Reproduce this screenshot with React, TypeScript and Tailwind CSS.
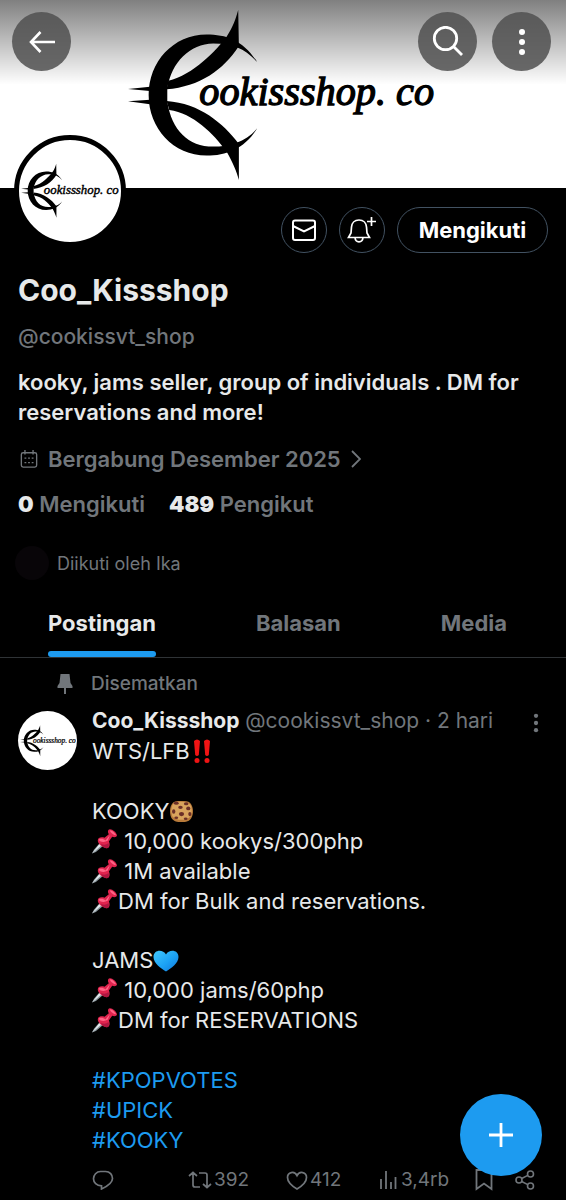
import type { ReactNode } from "react";

function Logo({ className }: { className: string }) {
  return (
    <svg viewBox="384 24 922 528" className={className} role="img" aria-label="Cookissshop.co">
      <path d="M772 186C730 120 680 103 620 103C520 103 446 185 446 285C446 385 520 467 620 467C680 467 735 445 772 385C740 425 690 440 640 440C565 440 515 390 502 305L502 265C515 185 570 132 640 130C700 130 735 145 772 186Z" />
      <path d="M715 30L717 138C670 210 600 260 500 268L505 242C580 225 650 150 680 110C700 80 708 55 715 30Z" />
      <path d="M717 540L717 432C670 370 600 310 500 303L508 330C580 340 640 400 680 455C700 490 710 515 717 540Z" />
      <path d="M384 267L450 260V273ZM384 304L450 299V313Z" />
      <text x="598" y="315" fontSize="121" stroke="black" strokeWidth="4" className="font-['Liberation_Serif',serif] italic">
        ookissshop. co
      </text>
    </svg>
  );
}

function Pushpin() {
  return (
    <svg viewBox="0 0 26 26" className="mr-px inline-block size-[25px] align-[-5px]" aria-hidden="true">
      <path d="M0 25.500L2 21.500L9.500 13L13 16.500L4 24Z" fill="#8d999f" />
      <path d="M0 25.500L9 14L11 16Z" fill="#e4eaed" />
      <path d="M6 12C6 8.500 10 8 13 9L17.500 5.500C16 3 16.500 .5 18.500 .3C21 0 25.500 3.500 26 6.500C26 8.500 23 9 21 8L17.500 13C19 16 18.500 19.500 15.500 20C12 20 6 16 6 12Z" fill="#e0244e" />
      <path d="M7 11.500C8 9.500 12 10 14 12L18.500 6.500L16.500 12C13.500 14 9 14 7 11.500ZM18.500 1.200C21 1.200 24.500 4.500 25 6.500C22 6 19 3.500 18.500 1.200Z" fill="#ff6687" />
      <path d="M9 15C12 17 15 16.500 17 14.500C18.500 17.500 17 19.500 15.500 20C13 20 10.500 18 9 15Z" fill="#ad1740" />
    </svg>
  );
}

function Cookie() {
  return (
    <svg viewBox="0 0 24 24" className="inline-block size-[25px] align-[-5px]" aria-hidden="true">
      <path d="M3 4.500C5 1.500 9 2 12 2C16 1.500 20 2 21.500 5.500C23.500 9 23.500 14 22 17C20 22 16 22 12 22C8 22.500 4 21.500 2 17.500C.5 13 .5 8 3 4.500Z" fill="#b87a3a" />
      <path d="M4 4.500C7 2 17 2 20.500 5.500C22.500 9 22 14 20.500 17C17 21 7 21 3.500 17C1.500 13 2 8 4 4.500Z" fill="#d9a45d" />
      <g fill="#6b2f27">
        <ellipse cx="7" cy="4" rx="2.300" ry="1.500" />
        <ellipse cx="16.500" cy="4.500" rx="2.200" ry="1.500" />
        <ellipse cx="11" cy="8" rx="2.200" ry="1.500" />
        <ellipse cx="4.500" cy="12" rx="1.600" ry="2.200" />
        <ellipse cx="12" cy="14.500" rx="2.500" ry="2" />
        <ellipse cx="18.500" cy="9" rx="2" ry="1.800" />
        <ellipse cx="20" cy="14.500" rx="1.500" ry="2" />
        <ellipse cx="7" cy="18" rx="1.800" ry="1.300" />
        <ellipse cx="16" cy="19" rx="1.800" ry="1.200" />
      </g>
    </svg>
  );
}

function BlueHeart() {
  return (
    <svg viewBox="0 0 26 24" className="inline-block h-6 w-[26px] align-[-5px]" aria-hidden="true">
      <defs>
        <linearGradient id="heart" x1="0" y1="0" x2="1" y2="1">
          <stop offset="0" stopColor="#43c8fb" />
          <stop offset=".55" stopColor="#1ba2f5" />
          <stop offset="1" stopColor="#1275d8" />
        </linearGradient>
      </defs>
      <path d="M13 22.500C8 19.500 .5 14 .5 8C.5 .5 10 0 13 5.500C16 0 25.500 .5 25.500 8C25.500 14 18 19.500 13 22.500Z" fill="url(#heart)" />
    </svg>
  );
}

function DoubleBang() {
  return (
    <svg viewBox="0 0 24 26" className="inline-block h-[26px] w-6 align-[-5px]" aria-hidden="true">
      <g fill="#f01414">
        <path d="M4 3Q7 0 10 3L8.800 17Q7 19 5.200 17ZM14 3Q17 0 20 3L18.800 17Q17 19 15.200 17Z" />
        <circle cx="7" cy="22.500" r="2.500" />
        <circle cx="17" cy="22.500" r="2.500" />
      </g>
    </svg>
  );
}

function Dots({ className }: { className: string }) {
  return (
    <svg viewBox="0 0 8 28" className={className} fill="currentColor" aria-hidden="true">
      <circle cx="4" cy="4" r="3" />
      <circle cx="4" cy="14" r="3" />
      <circle cx="4" cy="24" r="3" />
    </svg>
  );
}

function RoundButton({ label, children }: { label: string; children: ReactNode }) {
  return (
    <button aria-label={label} className="flex size-[59px] items-center justify-center rounded-full bg-[#505050]/85 text-white">
      {children}
    </button>
  );
}

function OutlineButton({ label, children }: { label: string; children: ReactNode }) {
  return (
    <button aria-label={label} className="flex size-[46px] items-center justify-center rounded-full border border-[#425262]">
      {children}
    </button>
  );
}

function Banner() {
  return (
    <header className="relative h-[188px] bg-white">
      <div className="flex h-full justify-center pt-2 pr-1">
        <Logo className="h-[176px] w-[307px]" />
      </div>
      <div className="absolute inset-0 flex items-start gap-[15px] bg-linear-to-b from-black/50 to-transparent to-45% pt-3 pr-[15px] pl-3">
        <RoundButton label="Kembali">
          <svg viewBox="0 0 28 24" className="h-6 w-7" fill="none" stroke="currentColor" strokeWidth="2.600" aria-hidden="true">
            <path d="M12.500 2L3 12L12.500 22M3 12H27" />
          </svg>
        </RoundButton>
        <span className="flex-1" />
        <RoundButton label="Cari">
          <svg viewBox="0 0 32 32" className="size-8" fill="none" stroke="currentColor" strokeWidth="2.800" aria-hidden="true">
            <circle cx="13.500" cy="12.500" r="11.200" />
            <path d="M21.500 20.500L30 29" />
          </svg>
        </RoundButton>
        <RoundButton label="Lainnya">
          <Dots className="h-7 w-2" />
        </RoundButton>
      </div>
    </header>
  );
}

function Profile() {
  return (
    <section>
      <div className="flex items-start justify-between pr-[18px] pl-3.5">
        <div className="relative mt-[-53px] flex size-28 items-center justify-center rounded-full border-5 border-black bg-white">
          <Logo className="h-14 w-[98px]" />
        </div>
        <div className="flex gap-3 pt-[19px]">
          <OutlineButton label="Pesan">
            <svg viewBox="0 0 24 22" className="h-[22px] w-6" fill="none" stroke="white" strokeWidth="2" aria-hidden="true">
              <rect x="1" y="1.500" width="22" height="19.500" rx="2" />
              <path d="M1 7L12 12.500L23 7" />
            </svg>
          </OutlineButton>
          <OutlineButton label="Notifikasi">
            <svg viewBox="0 0 30 28" className="h-7 w-[30px]" fill="none" stroke="white" strokeWidth="1.700" aria-hidden="true">
              <path d="M12 4C7.500 4 4.800 7 4.500 11L4 17L1.500 21.500H22.500L20 17L19.500 11C19.200 7 16.500 4 12 4ZM8 21.500C8.500 27.300 15.500 27.300 16 21.500" />
              <path d="M24.500 1V10M20 5.500H29" />
            </svg>
          </OutlineButton>
          <button className="h-[46px] w-[151px] rounded-full border border-[#425262] text-[22px] font-bold text-white">Mengikuti</button>
        </div>
      </div>
      <div className="px-[18px] pt-[17px]">
        <h1 className="text-[30px] leading-10 font-bold">Coo_Kissshop</h1>
        <p className="pt-3 text-[21px] leading-[30px] font-medium text-[#71767b]">@cookissvt_shop</p>
        <p className="pt-[15px] text-[22px] leading-[30px] font-semibold">
          kooky, jams seller, group of individuals . DM for reservations and more!
        </p>
        <a href="#about" className="flex items-center pt-[17px] text-[22px] leading-[30px] font-semibold text-[#71767b]">
          <svg viewBox="0 0 20 20" className="mr-2.5 ml-0.5 size-[18px]" fill="none" stroke="currentColor" strokeWidth="1.500" aria-hidden="true">
            <rect x="1.500" y="3" width="17" height="16" rx="2" />
            <path d="M5.500 0V5M14.500 0V5M5 9H7M9 9H11M13 9H15M5 14H7M9 14H11M13 14H15" />
          </svg>
          Bergabung Desember 2025
          <svg viewBox="0 0 10 18" className="ml-2.5 h-[18px] w-2.5" fill="none" stroke="currentColor" strokeWidth="1.800" aria-hidden="true">
            <path d="M1 1L9 9L1 17" />
          </svg>
        </a>
        <div className="flex gap-6 pt-[15px] text-[22px] leading-[30px] font-semibold text-[#71767b]">
          <a href="#following"><b className="text-[#e7e9ea]">0</b> Mengikuti</a>
          <a href="#followers"><b className="text-[#e7e9ea]">489</b> Pengikut</a>
        </div>
      </div>
      <div className="flex items-center gap-2 pt-[27px] pl-[15px] text-[18px] text-[#71767b]">
        <span className="size-[34px] rounded-full bg-[#080508]" />
        Diikuti oleh Ika
      </div>
    </section>
  );
}

function Tabs() {
  return (
    <nav className="mt-2.5 flex justify-between border-b border-[#2f3336] pr-[59px] pl-12 text-[22px] font-bold text-[#71767b]">
      <button className="relative h-[67px] text-[#e7e9ea]">
        Postingan
        <span className="absolute inset-x-0 bottom-0 h-1.5 rounded-full bg-[#1d9bf0]" />
      </button>
      <button>Balasan</button>
      <button>Media</button>
    </nav>
  );
}

function Actions() {
  return (
    <div className="flex h-[22px] items-center text-[19px] text-[#71767b]">
      <button aria-label="Balas" className="w-24">
        <svg viewBox="0 0 22 20" className="h-5 w-[22px]" fill="none" stroke="currentColor" strokeWidth="1.700" aria-hidden="true">
          <path d="M8.500 1.500H13.500C18 1.500 20.500 5 20.500 8.500C20.500 12 17 15.500 9.500 19V15.800C4.500 15.800 1.500 12.500 1.500 8.800C1.500 5 4.500 1.500 8.500 1.500Z" />
        </svg>
      </button>
      <button aria-label="392 posting ulang" className="flex w-[98px] items-center gap-0.5">
        <svg viewBox="0 0 24 18" className="h-[18px] w-6" fill="none" stroke="currentColor" strokeWidth="1.700" aria-hidden="true">
          <path d="M1 5L5 1.500L9 5M5 2V14Q5 16 7 16H12M11 2H17Q19 2 19 4V16M15 13L19 16.500L23 13" />
        </svg>
        392
      </button>
      <button aria-label="412 suka" className="flex w-[93px] items-center gap-0.5">
        <svg viewBox="0 0 22 19" className="h-[19px] w-[22px]" fill="none" stroke="currentColor" strokeWidth="1.700" aria-hidden="true">
          <path d="M11 18C6 15 1.500 11 1.500 6.500C1.500 1 8.500-.5 11 4.500C13.500-.5 20.500 1 20.500 6.500C20.500 11 16 15 11 18Z" />
        </svg>
        412
      </button>
      <button aria-label="3,4rb tayangan" className="flex w-24 items-center gap-1">
        <svg viewBox="0 0 18 20" className="h-5 w-[18px]" fill="none" stroke="currentColor" strokeWidth="1.800" aria-hidden="true">
          <path d="M2 9V19M7 1V19M12 12V19M16.500 7V19" />
        </svg>
        3,4rb
      </button>
      <button aria-label="Markah" className="w-10">
        <svg viewBox="0 0 18 22" className="h-[22px] w-[18px]" fill="none" stroke="currentColor" strokeWidth="1.800" aria-hidden="true">
          <path d="M1.500 1V20L9 14.500L16.500 20V1Z" />
        </svg>
      </button>
      <button aria-label="Bagikan">
        <svg viewBox="0 0 20 20" className="size-5" fill="none" stroke="currentColor" strokeWidth="1.600" aria-hidden="true">
          <circle cx="4" cy="10" r="3" />
          <circle cx="15.500" cy="4" r="3" />
          <circle cx="15.500" cy="16" r="3" />
          <path d="M6.700 8.500L12.800 5.400M6.700 11.500L12.800 14.600" />
        </svg>
      </button>
    </div>
  );
}

function Post() {
  return (
    <article className="pb-2 pl-[18px]">
      <div className="flex items-center pt-[11px] pl-10 text-[19px] leading-[30px] font-medium text-[#71767b]">
        <svg viewBox="0 0 16 20" className="mr-[18px] -ml-px h-5 w-4" fill="currentColor" aria-hidden="true">
          <path d="M3.500 0H12.500L13.500 9L15.500 12V14H9V20H7V14H.5V12L2.500 9Z" />
        </svg>
        Disematkan
      </div>
      <div className="flex items-start pt-[7px]">
        <div className="mt-[5px] flex size-[59px] shrink-0 items-center justify-center rounded-full bg-white">
          <Logo className="h-8 w-14" />
        </div>
        <div className="flex-1 pl-[15px]">
          <div className="flex items-center justify-between pr-[26px] leading-[30px] text-[#71767b]">
            <p className="text-[21px]">
              <b className="font-bold text-[#e7e9ea]">Coo_Kissshop</b> @cookissvt_shop · 2 hari
            </p>
            <button aria-label="Opsi posting" className="pt-1"><Dots className="h-5 w-2" /></button>
          </div>
          <div className="text-[22px] leading-[30px] text-[#e7e9ea]">
            <p>WTS/LFB<DoubleBang /></p>
            <p className="pt-[30px]">KOOKY<Cookie /></p>
            <p><Pushpin /> 10,000 kookys/300php</p>
            <p><Pushpin /> 1M available</p>
            <p><Pushpin />DM for Bulk and reservations.</p>
            <p className="pt-[29px]">JAMS<BlueHeart /></p>
            <p><Pushpin /> 10,000 jams/60php</p>
            <p><Pushpin />DM for RESERVATIONS</p>
            <div className="flex flex-col items-start pt-[30px] pb-3.5 text-[#1d9bf0]">
              <a href="#kpopvotes">#KPOPVOTES</a>
              <a href="#upick">#UPICK</a>
              <a href="#kooky">#KOOKY</a>
            </div>
          </div>
          <Actions />
        </div>
      </div>
    </article>
  );
}

export default function App() {
  return (
    <main className="min-h-screen bg-black font-[Inter,'Liberation_Sans',sans-serif] text-[#e7e9ea]">
      <Banner />
      <Profile />
      <Tabs />
      <Post />
      <button aria-label="Buat posting" className="fixed right-6 bottom-6 flex size-[82px] items-center justify-center rounded-full bg-[#1d9bf0]">
        <svg viewBox="0 0 24 24" className="size-6" fill="none" stroke="white" strokeWidth="2.800" aria-hidden="true">
          <path d="M12 0V24M0 12H24" />
        </svg>
      </button>
    </main>
  );
}
